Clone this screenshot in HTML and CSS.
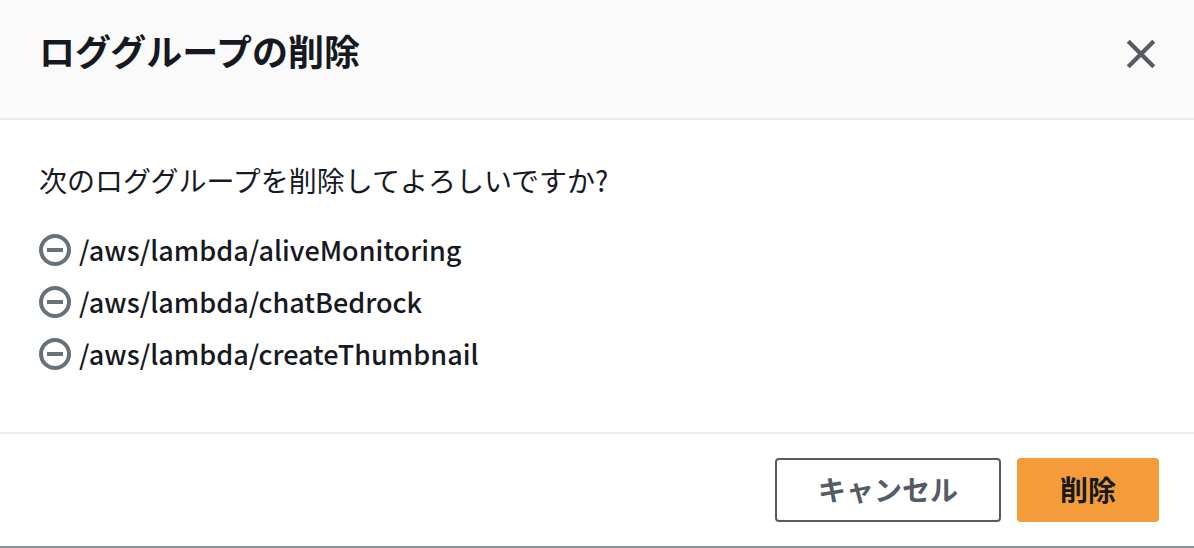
FILE: index.html
```html
<!DOCTYPE html>
<html lang="ja">
<head>
<meta charset="utf-8">
<meta name="viewport" content="width=device-width, initial-scale=1">
<title>ロググループの削除</title>
<link rel="stylesheet" href="styles.css">
</head>
<body>
<div class="modal" role="dialog" aria-labelledby="modal-title">
  <header class="modal-header">
    <h2 class="modal-title" id="modal-title">ロググループの削除</h2>
    <button class="close" type="button" aria-label="閉じる">
      <svg class="close-icon" viewBox="0 0 32 32" aria-hidden="true"><path d="M4 4 28 28M28 4 4 28"/></svg>
    </button>
  </header>
  <main class="modal-body">
    <p class="question">次のロググループを削除してよろしいですか?</p>
    <ul class="groups">
      <li class="group"><svg class="group-icon" viewBox="0 0 32 32" aria-hidden="true"><circle cx="16" cy="16" r="14"/><path d="M8 16h16"/></svg><span>/aws/lambda/aliveMonitoring</span></li>
      <li class="group"><svg class="group-icon" viewBox="0 0 32 32" aria-hidden="true"><circle cx="16" cy="16" r="14"/><path d="M8 16h16"/></svg><span>/aws/lambda/chatBedrock</span></li>
      <li class="group"><svg class="group-icon" viewBox="0 0 32 32" aria-hidden="true"><circle cx="16" cy="16" r="14"/><path d="M8 16h16"/></svg><span>/aws/lambda/createThumbnail</span></li>
    </ul>
  </main>
  <footer class="modal-footer">
    <button class="button" type="button">キャンセル</button>
    <button class="button button-primary" type="button">削除</button>
  </footer>
</div>
</body>
</html>
```
FILE: styles.css
```css
* {
  box-sizing: border-box;
}

body {
  margin: 0;
  background: #fff;
  color: #16191f;
  font-family: "Noto Sans CJK JP", sans-serif;
  font-size: 28px;
  line-height: 44px;
}

.modal {
  border-bottom: 2px solid #879596;
}

.modal-header {
  display: flex;
  justify-content: space-between;
  align-items: flex-start;
  padding: 26px 36px 44px 39px;
  background: #fafafa;
  border-bottom: 2px solid #ebebeb;
}

.modal-title {
  margin: 0;
  font-size: 36px;
  line-height: 48px;
  font-weight: 700;
}

.close {
  display: flex;
  margin: 11px 0 0;
  padding: 0;
  border: 0;
  background: none;
  color: #545b64;
  cursor: pointer;
}

.close-icon {
  width: 34px;
  height: 34px;
  fill: none;
  stroke: currentColor;
  stroke-width: 4;
}

.modal-body {
  padding: 38px 39px;
}

.question {
  margin: 0 0 26px;
}

.groups {
  display: grid;
  gap: 8px;
  margin: 0;
  padding: 0 0 18px;
  list-style: none;
}

.group {
  display: flex;
  align-items: center;
  gap: 8px;
  font-size: 27px;
  font-weight: 500;
}

.group-icon {
  flex: none;
  width: 32px;
  height: 32px;
  fill: none;
  stroke: #687078;
  stroke-width: 4;
}

.modal-footer {
  display: flex;
  justify-content: flex-end;
  gap: 16px;
  padding: 24px 35px;
  border-top: 2px solid #ebebeb;
}

.button {
  padding: 7px 41px 9px;
  border: 2px solid #545b64;
  border-radius: 4px;
  background: #fff;
  color: #545b64;
  font: inherit;
  font-weight: 700;
  cursor: pointer;
}

.button-primary {
  border-color: #f39c39;
  background: #f39c39;
  color: #16191f;
}
```
